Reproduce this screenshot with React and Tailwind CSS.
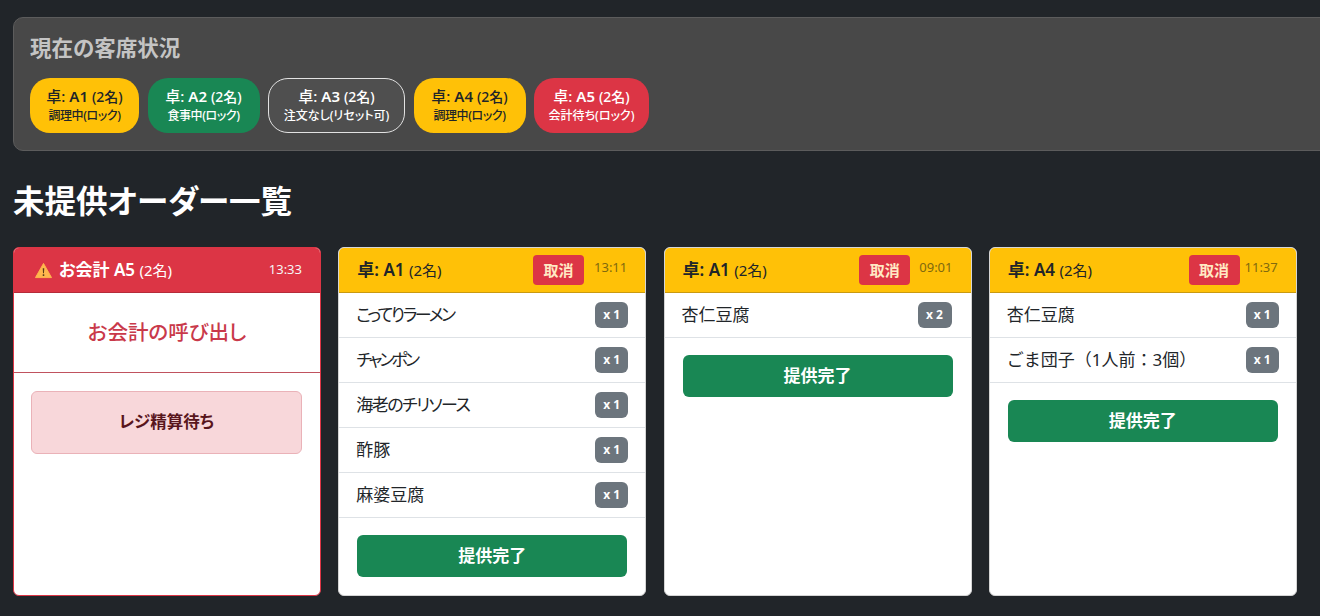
const seats = [
  { name: 'A1', status: '調理中(ロック)', cls: 'bg-[#ffc107] text-[#212529] w-[109px]', statusCls: 'tracking-[-0.4px]' },
  { name: 'A2', status: '食事中(ロック)', cls: 'bg-[#198754] text-white w-[112px]', statusCls: 'tracking-[-0.4px]' },
  { name: 'A3', status: '注文なし(リセット可)', cls: 'bg-[#4f4f4f] text-white border border-[#e2e2e2] w-[137px]', statusCls: '' },
  { name: 'A4', status: '調理中(ロック)', cls: 'bg-[#ffc107] text-[#212529] w-[112px]', statusCls: 'tracking-[-0.4px]' },
  { name: 'A5', status: '会計待ち(ロック)', cls: 'bg-[#dc3545] text-white w-[115px]', statusCls: '' },
]

const plain = '[font-feature-settings:normal]'

const orders = [
  {
    table: 'A1',
    time: '13:11',
    gap: 'gap-[10px]',
    items: [
      { name: 'こってりラーメン', qty: 1, cls: 'tracking-[-2.4px]' },
      { name: 'チャンポン', qty: 1, cls: 'tracking-[-3px]' },
      { name: '海老のチリソース', qty: 1, cls: 'tracking-[-1.5px]' },
      { name: '酢豚', qty: 1, cls: plain },
      { name: '麻婆豆腐', qty: 1, cls: plain },
    ],
  },
  { table: 'A1', time: '09:01', gap: 'gap-[9px]', items: [{ name: '杏仁豆腐', qty: 2, cls: plain }] },
  {
    table: 'A4',
    time: '11:37',
    gap: 'gap-[5px]',
    items: [
      { name: '杏仁豆腐', qty: 1, cls: plain },
      { name: 'ごま団子（1人前：3個）', qty: 1, cls: plain },
    ],
  },
]

function SeatPill({ seat }) {
  return (
    <div className={`h-[55px] rounded-[20px] flex flex-col items-center justify-center ${seat.cls}`}>
      <div className="text-[15px] leading-[21px] font-medium whitespace-nowrap">
        卓: <span className="font-semibold">{seat.name}</span> <span className="text-[14px]">(2名)</span>
      </div>
      <div className={`text-[12px] leading-[18px] font-medium whitespace-nowrap ${seat.statusCls}`}>{seat.status}</div>
    </div>
  )
}

function WarnIcon() {
  return (
    <svg width="17" height="17" viewBox="0 0 18 17">
      <path d="M9 1 L17.5 16 L0.5 16 Z" fill="#ffb74d" stroke="#ffb74d" strokeLinejoin="round" />
      <path d="M8.2 6 H9.8 L9.5 11.5 H8.5 Z M8.2 12.6 H9.8 V14.2 H8.2 Z" fill="#5a3d1a" />
    </svg>
  )
}

function CheckoutCard() {
  return (
    <div className="w-[308px] shrink-0 bg-white rounded-[6px] border border-[#dc3545] overflow-hidden flex flex-col">
      <div className="h-[45px] bg-[#dc3545] text-white border-b border-[#b52b3a] flex justify-between pl-[21px] pr-[18px]">
        <div className="flex items-center gap-[7px]">
          <WarnIcon />
          <span className="text-[17px] font-semibold whitespace-nowrap">
            お会計 A5 <span className="text-[15px] font-normal">(2名)</span>
          </span>
        </div>
        <span className="text-[13px] leading-[42px] text-[#f6f6f6]">13:33</span>
      </div>
      <div className="h-[80px] border-b border-[#c0525e] flex items-center justify-center text-[20.5px] font-medium text-[#c9394a]">
        お会計の呼び出し
      </div>
      <div className="pl-[17px] pr-[18px] pt-[18px]">
        <div className="h-[63px] bg-[#f8d7da] border border-[#eab2b8] rounded-[6px] flex items-center justify-center text-[16.5px] font-semibold text-[#58151c]">
          レジ精算待ち
        </div>
      </div>
    </div>
  )
}

function OrderCard({ order }) {
  return (
    <div className="w-[308px] shrink-0 bg-white rounded-[6px] border border-[#d5d5d5] overflow-hidden flex flex-col">
      <div className="h-[45px] bg-[#ffc107] border-b border-[#c99a10] flex items-center justify-between pl-[18px] pr-[18px] text-[#212529]">
        <span className="text-[17px] font-semibold whitespace-nowrap">
          卓: {order.table} <span className="text-[15px] font-normal">(2名)</span>
        </span>
        <div className={`flex items-center ${order.gap}`}>
          <span className="w-[51px] h-[30px] bg-[#dc3545] rounded-[4px] text-[#ffe9c4] text-[15px] font-semibold flex items-center justify-center">取消</span>
          <span className="text-[13px] text-[#80690f] pb-[4px]">{order.time}</span>
        </div>
      </div>
      {order.items.map((item, i) => (
        <div key={i} className="h-[45px] border-b border-[#dee2e6] flex items-center justify-between pl-[17px] pr-[17px]">
          <span className={`text-[17px] text-[#212529] whitespace-nowrap ${item.cls || ''}`}>{item.name}</span>
          <span className={`h-[26px] bg-[#6c757d] rounded-[6px] text-white text-[12px] font-bold flex items-center justify-center ${item.qty > 1 ? 'w-[34px] mr-[2px]' : 'w-[33px]'}`}>x {item.qty}</span>
        </div>
      ))}
      <div className="px-[18px] pt-[17px]">
        <div className="h-[42px] bg-[#198754] rounded-[6px] text-white text-[17px] font-semibold flex items-center justify-center">提供完了</div>
      </div>
    </div>
  )
}

export default function App() {
  return (
    <div className="w-[1320px] h-[616px] overflow-hidden bg-[#212529] pl-[13px] pt-[17px] font-['Noto_Sans','Noto_Sans_CJK_JP',sans-serif] [font-feature-settings:'palt']">
      <div className="w-[1340px] h-[134px] bg-[#484848] border border-[#5c5c5c] rounded-[10px] pl-[16px] pt-[14px]">
        <h2 className="text-[21.5px] leading-[32px] font-semibold text-[#c4c4c4]">現在の客席状況</h2>
        <div className="flex gap-[8.5px] mt-[14px]">
          {seats.map((s) => <SeatPill key={s.name} seat={s} />)}
        </div>
      </div>
      <h1 className="text-[31.5px] leading-[44px] font-semibold text-white mt-[28px]">未提供オーダー一覧</h1>
      <div className="flex gap-[17.25px] mt-[24px] h-[349px]">
        <CheckoutCard />
        {orders.map((o, i) => <OrderCard key={i} order={o} />)}
      </div>
    </div>
  )
}
